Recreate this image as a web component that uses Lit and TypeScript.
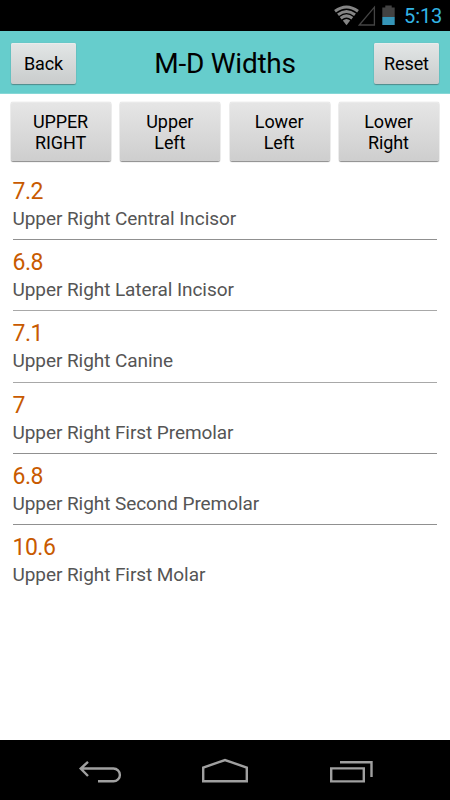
import { LitElement, html, css } from "lit";
import { customElement } from "lit/decorators.js";

const TABS = [["UPPER", "RIGHT"], ["Upper", "Left"], ["Lower", "Left"], ["Lower", "Right"]];

const TEETH = [
  { width: "7.2", name: "Upper Right Central Incisor" },
  { width: "6.8", name: "Upper Right Lateral Incisor" },
  { width: "7.1", name: "Upper Right Canine" },
  { width: "7", name: "Upper Right First Premolar" },
  { width: "6.8", name: "Upper Right Second Premolar" },
  { width: "10.6", name: "Upper Right First Molar" },
];

@customElement("app-root")
export class AppRoot extends LitElement {
  static styles = css`
    :host { display: flex; flex-direction: column; height: 800px; background: #fff; font-family: Roboto, sans-serif; color: #000; overflow: hidden; }
    * { box-sizing: border-box; }
    svg { display: block; }
    button { font: inherit; color: #000; padding: 0; border: 0; border-radius: 2px; }
    .status { height: 31px; flex: none; background: #000; display: flex; justify-content: flex-end; padding-right: 7px; }
    .status svg { margin-right: 4px; }
    .clock { width: 39px; font-size: 20px; line-height: 32px; color: #33b5e5; letter-spacing: -0.1px; white-space: nowrap; }
    .header { height: 63px; flex: none; background: linear-gradient(#66cdcc 62px, #85d7d6 62px); display: flex; justify-content: space-between; padding: 12px 11px 0; }
    .title { font-size: 28px; line-height: 41px; font-weight: 400; margin: 0; letter-spacing: -0.25px; }
    .action { width: 65px; height: 41px; font-size: 18px; letter-spacing: -0.1px; background: linear-gradient(#e2e6e6, #c9cccc); box-shadow: 0 0 1px #6f9f9f, 0 1px 1px #4d8888, inset 0 1px #e8ecec; }
    .tabs { display: grid; grid-template-columns: repeat(4, 100px); justify-content: space-between; padding: 8px 11px 0; flex: none; }
    .tab { height: 59px; font-size: 18px; line-height: 21px; letter-spacing: -0.1px; padding-right: 1px; background: linear-gradient(#e6e6e6, #cecece); box-shadow: 0 0 1px #aaa, 0 1px 1px #888, inset 0 1px #eaeaea; }
    .tab span { display: block; }
    .list { list-style: none; margin: 0; padding: 7.9px 12.7px 0 12.5px; flex: 1; }
    .row { height: 71.25px; padding-top: 8px; border-bottom: 1px solid #909090; }
    .row:nth-child(2), .row:nth-child(3) { border-bottom-color: #a8a8a8; }
    .row:last-child { border-bottom: 0; }
    .value { font-size: 23px; line-height: 29px; color: #c85a00; letter-spacing: -0.5px; }
    .name { font-size: 19px; line-height: 26px; color: #555; letter-spacing: -0.07px; }
    .nav { height: 60px; flex: none; background: #000; }
  `;

  render() {
    return html`
      <div class="status">
        <svg width="66" height="31" viewBox="334 0 66 31">
          <g fill="none" stroke="#858585" stroke-width="3">
            <path d="M335 11.2Q346.5 2.8 358 11.2M338 14.8Q346.5 8.2 355 14.8M340.7 18.2Q346.5 13.6 352.3 18.2"/>
          </g>
          <path d="M342.8 20.6Q346.5 17.6 350.2 20.6L346.5 25.2Z" fill="#858585"/>
          <path d="M359.3 25L374.4 7.2V25Z" fill="none" stroke="#444" stroke-width="1.3"/>
          <path d="M382.3 7.5H385.3V5.5H391.7V7.5H394.7V17H382.3Z" fill="#424242"/>
          <path d="M382.3 17H394.7V25H382.3Z" fill="#3595b8"/>
        </svg>
        <span class="clock">5:13</span>
      </div>
      <header class="header">
        <button class="action">Back</button>
        <h1 class="title">M-D Widths</h1>
        <button class="action">Reset</button>
      </header>
      <div class="tabs">
        ${TABS.map(([a, b]) => html`<button class="tab"><span>${a}</span><span>${b}</span></button>`)}
      </div>
      <ul class="list">
        ${TEETH.map((t) => html`<li class="row"><div class="value">${t.width}</div><div class="name">${t.name}</div></li>`)}
      </ul>
      <div class="nav">
        <svg width="450" height="60" viewBox="0 740 450 60" fill="none" stroke="#a0a0a0" stroke-width="2.4">
          <path d="M80.5 768.5H113.5A6.4 6.4 0 0 1 113.5 781.3H98M88 761.8L80.7 768.5L88 776"/>
          <path d="M203.2 781.3V767.6L225 760L246.8 767.6V781.3Z"/>
          <path d="M331.2 768.4H363.8V781.4H331.2ZM340 762.2H371.5V777"/>
        </svg>
      </div>
    `;
  }
}
